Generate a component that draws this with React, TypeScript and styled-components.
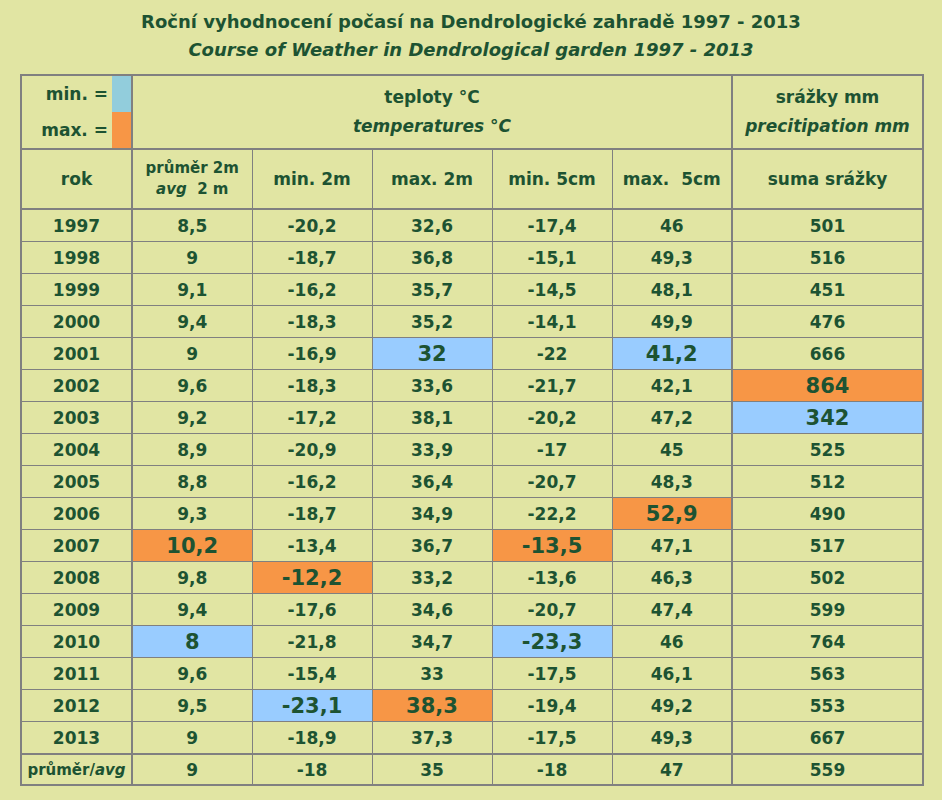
import React from 'react'
import styled, { createGlobalStyle } from 'styled-components'

const GlobalStyle = createGlobalStyle`
  body {
    margin: 0;
    background: #e1e5a3;
    font-family: "DejaVu Sans", Verdana, sans-serif;
    color: #1d5332;
  }
`

const Page = styled.div`
  width: 942px;
  height: 800px;
  padding-top: 8px;
  box-sizing: border-box;
`

const Title = styled.h1<{ $italic?: boolean }>`
  margin: 0;
  text-align: center;
  font-size: 18px;
  line-height: 28px;
  font-weight: bold;
  font-style: ${(p) => (p.$italic ? 'italic' : 'normal')};
`

const Table = styled.table`
  margin: 10px 0 0 20px;
  width: 902px;
  border-collapse: collapse;
  table-layout: fixed;
  border: 2px solid #808080;
`

const Cell = styled.td<{ $mark?: 'b' | 'o'; $thickRight?: boolean }>`
  border: 1px solid #808080;
  border-right-width: ${(p) => (p.$thickRight ? '2px' : '1px')};
  padding: 0;
  height: 31px;
  text-align: center;
  vertical-align: middle;
  font-weight: bold;
  font-size: ${(p) => (p.$mark ? '21px' : '17px')};
  background: ${(p) => (p.$mark === 'b' ? '#99ccff' : p.$mark === 'o' ? '#f79646' : 'transparent')};
`

const HeadCell = styled(Cell)`
  height: 58px;
  border-bottom-width: 2px;
  line-height: 22px;
`

const SmallHead = styled.div`
  font-size: 15px;
  line-height: 21px;
`

const Italic = styled.span`
  font-style: italic;
`

const LegendCell = styled.td`
  border: 2px solid #808080;
  padding: 0;
`

const Legend = styled.div`
  display: grid;
  grid-template-columns: 1fr 19px;
  grid-template-rows: 36px 36px;
  height: 72px;
`

const LegendLabel = styled.div`
  display: flex;
  align-items: center;
  justify-content: flex-end;
  padding-right: 4px;
  font-weight: bold;
  font-size: 17px;
`

const Swatch = styled.div<{ $color: string }>`
  background: ${(p) => p.$color};
`

const GroupCell = styled.td`
  border: 2px solid #808080;
  padding: 0;
  text-align: center;
  font-weight: bold;
  font-size: 17px;
  line-height: 29px;
`

const AvgCell = styled(Cell)`
  height: 29px;
  border-top-width: 2px;
`

const AvgLabel = styled(AvgCell)`
  font-size: 15px;
`

const rows = [
  '1997 8,5 -20,2 32,6 -17,4 46 501',
  '1998 9 -18,7 36,8 -15,1 49,3 516',
  '1999 9,1 -16,2 35,7 -14,5 48,1 451',
  '2000 9,4 -18,3 35,2 -14,1 49,9 476',
  '2001 9 -16,9 32:b -22 41,2:b 666',
  '2002 9,6 -18,3 33,6 -21,7 42,1 864:o',
  '2003 9,2 -17,2 38,1 -20,2 47,2 342:b',
  '2004 8,9 -20,9 33,9 -17 45 525',
  '2005 8,8 -16,2 36,4 -20,7 48,3 512',
  '2006 9,3 -18,7 34,9 -22,2 52,9:o 490',
  '2007 10,2:o -13,4 36,7 -13,5:o 47,1 517',
  '2008 9,8 -12,2:o 33,2 -13,6 46,3 502',
  '2009 9,4 -17,6 34,6 -20,7 47,4 599',
  '2010 8:b -21,8 34,7 -23,3:b 46 764',
  '2011 9,6 -15,4 33 -17,5 46,1 563',
  '2012 9,5 -23,1:b 38,3:o -19,4 49,2 553',
  '2013 9 -18,9 37,3 -17,5 49,3 667',
].map((r) => r.split(' '))

const avg = ['9', '-18', '35', '-18', '47', '559']

const thickAfter = (i: number) => i === 0 || i === 5

export default function App() {
  return (
    <Page>
      <GlobalStyle />
      <Title>Roční vyhodnocení počasí na Dendrologické zahradě 1997 - 2013</Title>
      <Title $italic>Course of Weather in Dendrological garden 1997 - 2013</Title>
      <Table>
        <colgroup>
          <col style={{ width: 111 }} />
          <col style={{ width: 120 }} />
          <col style={{ width: 120 }} />
          <col style={{ width: 120 }} />
          <col style={{ width: 120 }} />
          <col style={{ width: 120 }} />
          <col style={{ width: 191 }} />
        </colgroup>
        <thead>
          <tr>
            <LegendCell>
              <Legend>
                <LegendLabel>min. =</LegendLabel>
                <Swatch $color="#92cddc" />
                <LegendLabel>max. =</LegendLabel>
                <Swatch $color="#f79646" />
              </Legend>
            </LegendCell>
            <GroupCell colSpan={5}>
              teploty °C
              <br />
              <Italic>temperatures °C</Italic>
            </GroupCell>
            <GroupCell>
              srážky mm
              <br />
              <Italic>precitipation mm</Italic>
            </GroupCell>
          </tr>
          <tr>
            <HeadCell $thickRight>rok</HeadCell>
            <HeadCell>
              <SmallHead>
                průměr 2m
                <br />
                <Italic>avg</Italic>&nbsp; 2 m
              </SmallHead>
            </HeadCell>
            <HeadCell>min. 2m</HeadCell>
            <HeadCell>max. 2m</HeadCell>
            <HeadCell>min. 5cm</HeadCell>
            <HeadCell $thickRight>max.&nbsp; 5cm</HeadCell>
            <HeadCell>suma srážky</HeadCell>
          </tr>
        </thead>
        <tbody>
          {rows.map((r) => (
            <tr key={r[0]}>
              {r.map((v, i) => {
                const [val, mark] = v.split(':')
                return (
                  <Cell key={i} $thickRight={thickAfter(i)} $mark={mark as 'b' | 'o' | undefined}>
                    {val}
                  </Cell>
                )
              })}
            </tr>
          ))}
          <tr>
            <AvgLabel $thickRight>
              průměr/<Italic>avg</Italic>
            </AvgLabel>
            {avg.map((v, i) => (
              <AvgCell key={i} $thickRight={i === 4}>
                {v}
              </AvgCell>
            ))}
          </tr>
        </tbody>
      </Table>
    </Page>
  )
}
